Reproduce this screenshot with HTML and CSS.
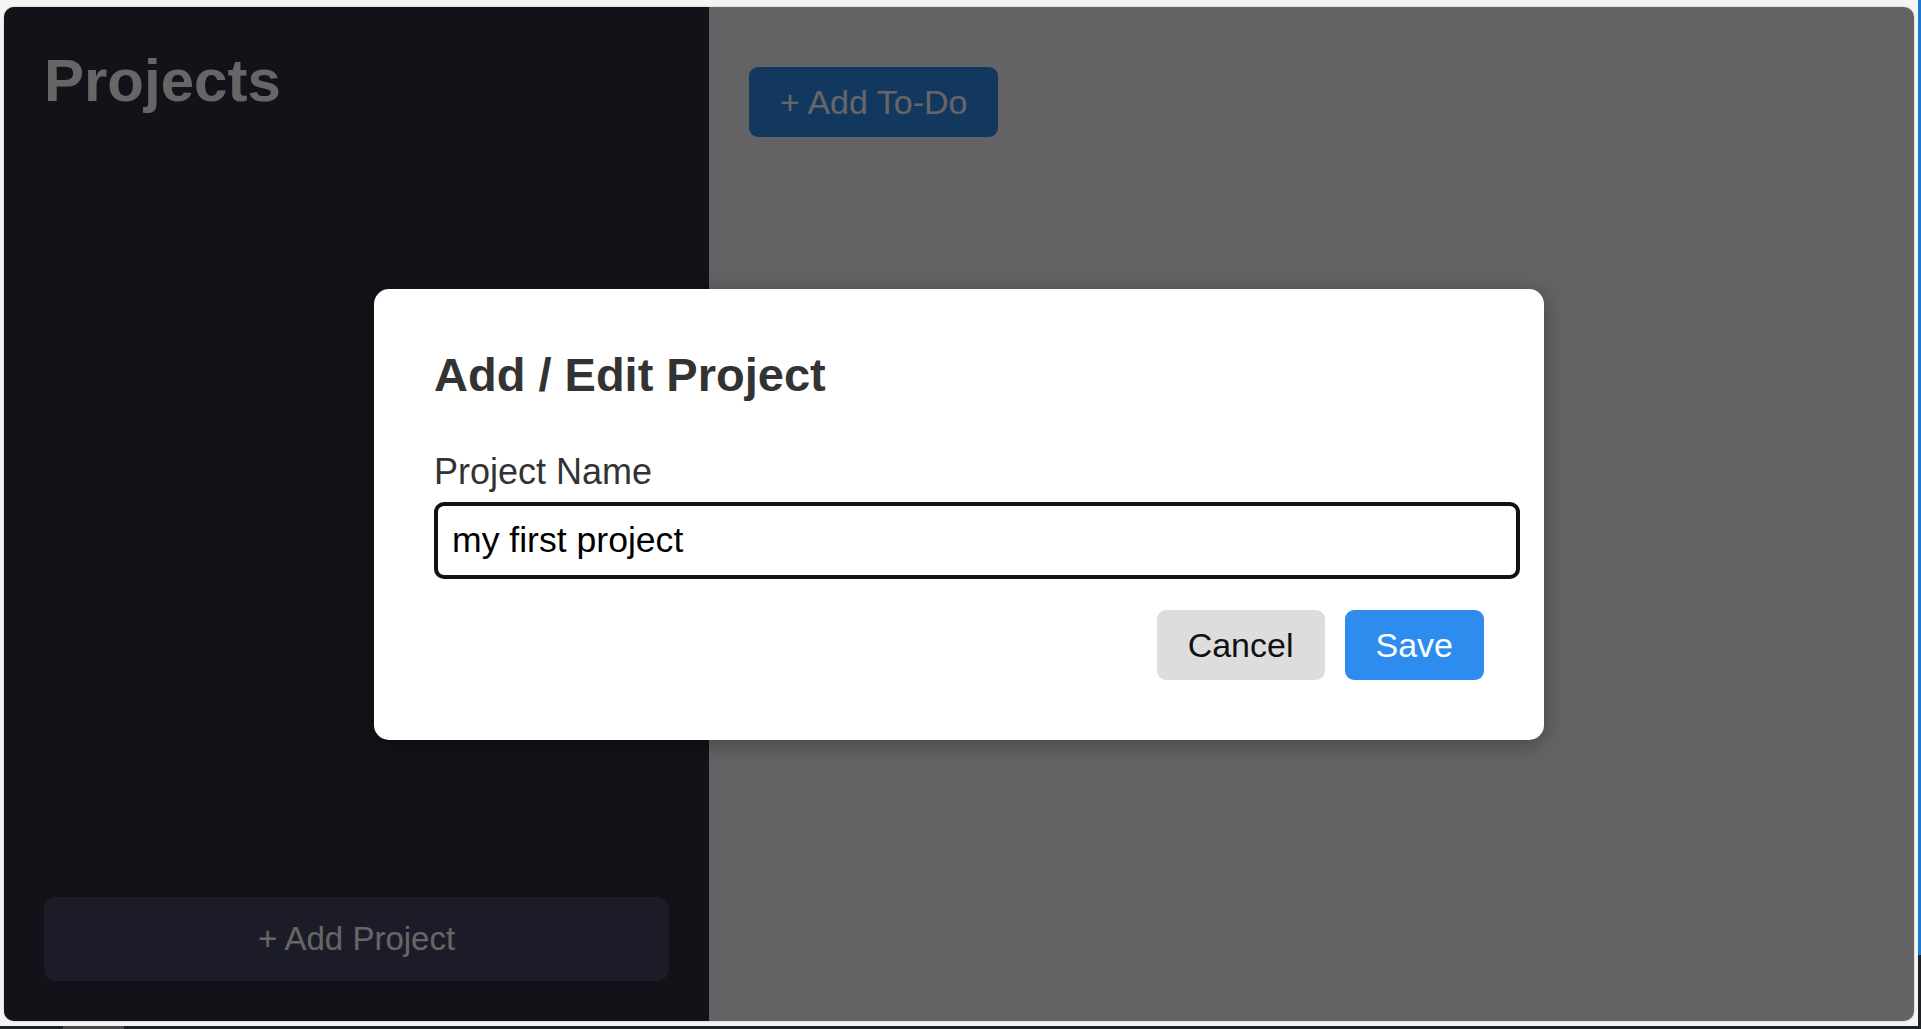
FILE: index.html
```html
<!DOCTYPE html>
<html lang="en">
<head>
<meta charset="utf-8">
<title>Projects</title>
<link rel="stylesheet" href="styles.css">
</head>
<body>
<div class="screen">
  <div class="page">
    <div class="app">
      <aside class="sidebar">
        <h1 class="sidebar-title">Projects</h1>
        <button class="btn-add-project" type="button">+ Add Project</button>
      </aside>
      <main class="content">
        <div class="toolbar">
          <button class="btn btn-primary" type="button">+ Add To-Do</button>
        </div>
      </main>
      <div class="overlay">
        <div class="modal">
          <h2 class="modal-title">Add / Edit Project</h2>
          <label class="field-label" for="pname">Project Name</label>
          <input class="field-input" id="pname" type="text" value="my first project">
          <div class="modal-actions">
            <button class="btn btn-secondary" type="button">Cancel</button>
            <button class="btn btn-primary" type="button">Save</button>
          </div>
        </div>
      </div>
    </div>
  </div>
  <div class="edge-right"></div>
  <div class="edge-bottom"><span class="edge-tab"></span></div>
</div>
</body>
</html>
```
FILE: styles.css
```css
* { box-sizing: border-box; }

html, body {
  margin: 0;
  padding: 0;
  width: 1921px;
  height: 1029px;
  overflow: hidden;
  font-family: "Liberation Sans", Arial, sans-serif;
}

.screen {
  display: grid;
  grid-template-columns: 1918px 3px;
  grid-template-rows: 1026px 3px;
  width: 1921px;
  height: 1029px;
}

.page {
  background: #f4f4f4;
  padding: 7px 4px 5px 4px;
}

.edge-right {
  background: linear-gradient(to bottom, #1b7bd4 0, #1b7bd4 955px, #1d2024 955px);
}

.edge-bottom {
  grid-column: 1 / 3;
  background: #1e2226;
  display: flex;
}

.edge-tab {
  margin-left: 63px;
  width: 61px;
  background: #4a4b4d;
}

.app {
  position: relative;
  display: flex;
  height: 100%;
  border-radius: 10px;
  overflow: hidden;
  box-shadow: 0 0 2px rgba(0, 0, 0, 0.25);
}

.sidebar {
  width: 705px;
  flex: none;
  background: #2d2d3e;
  padding: 40px;
  display: flex;
  flex-direction: column;
}

.sidebar-title {
  margin: 4px 0 0 0;
  font-size: 60px;
  line-height: 60px;
  font-weight: bold;
  color: #ffffff;
}

.btn-add-project {
  margin-top: auto;
  height: 84px;
  width: 100%;
  border: none;
  border-radius: 12px;
  background: #464666;
  color: #ffffff;
  font-family: inherit;
  font-size: 33px;
}

.content {
  flex: 1;
  background: #f8f8fc;
  padding: 60px 40px 40px 40px;
}

.btn {
  border: none;
  border-radius: 9px;
  font-family: inherit;
  font-size: 34px;
  line-height: 38px;
  padding: 16px 31px;
  cursor: pointer;
}

.btn-primary {
  background: #2e8cee;
  color: #ffffff;
}

.btn-secondary {
  background: #dddddd;
  color: #111111;
}

.overlay {
  position: absolute;
  inset: 0;
  background: rgba(0, 0, 0, 0.6);
  display: flex;
  align-items: center;
  justify-content: center;
}

.modal {
  width: 1170px;
  background: #ffffff;
  border-radius: 15px;
  padding: 58px 60px 60px 60px;
  box-shadow: 0 4px 20px rgba(0, 0, 0, 0.3);
}

.modal-title {
  margin: 0 0 49px 0;
  font-size: 47px;
  font-weight: bold;
  color: #333333;
}

.field-label {
  display: block;
  font-size: 36px;
  color: #333333;
  margin-bottom: 9px;
}

.field-input {
  box-sizing: content-box;
  display: block;
  width: 100%;
  padding: 14px;
  border: 4px solid #121212;
  border-radius: 10px;
  font-family: inherit;
  font-size: 35.6px;
  color: #000000;
  outline: none;
}

.modal-actions {
  display: flex;
  justify-content: flex-end;
  gap: 20px;
  margin-top: 31px;
}
```
